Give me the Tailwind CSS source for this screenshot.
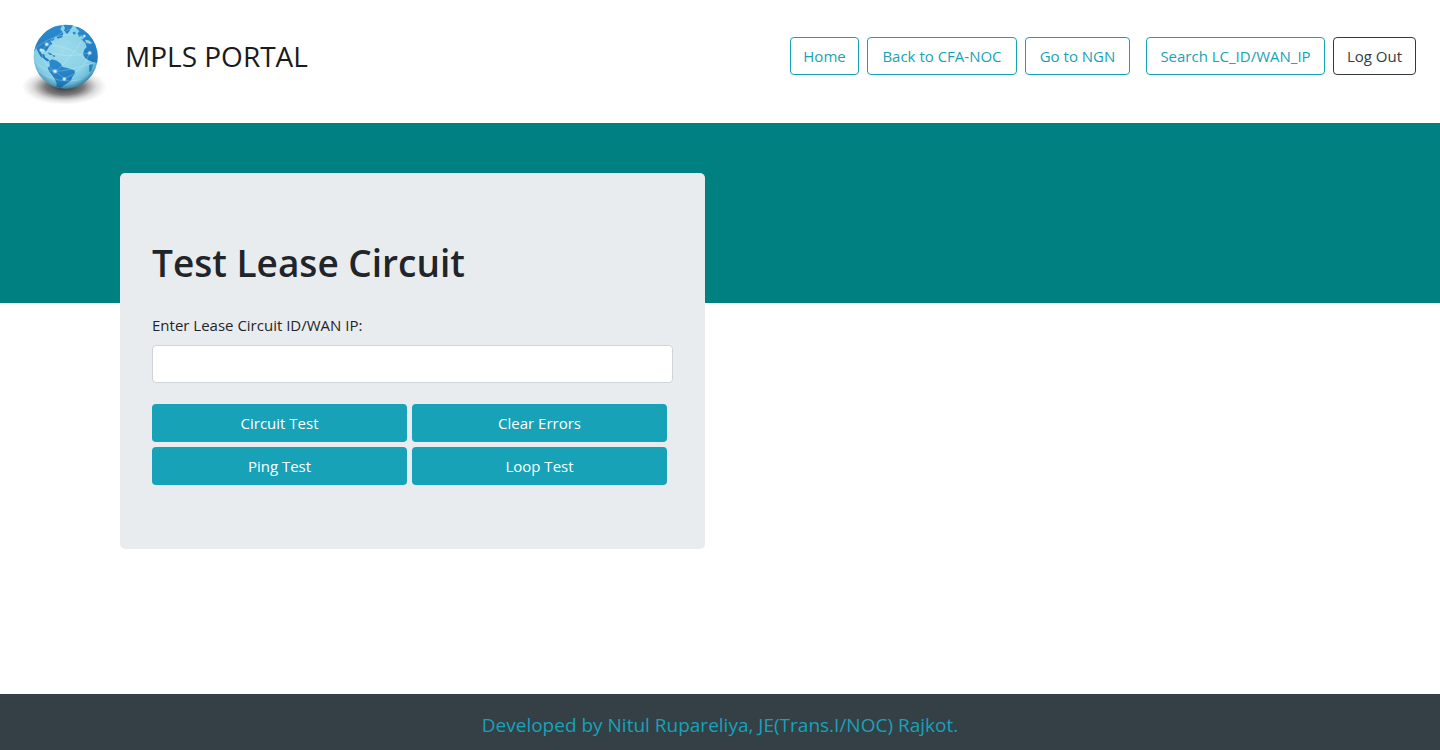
<!DOCTYPE html>
<html lang="en">
<head>
<meta charset="utf-8">
<meta name="viewport" content="width=device-width, initial-scale=1">
<title>MPLS Portal</title>
<script src="https://cdn.jsdelivr.net/npm/@tailwindcss/browser@4"></script>
</head>
<body class="flex min-h-screen flex-col bg-white font-['Segoe_UI','Open_Sans',sans-serif] text-[15px] leading-6 text-[#212529]">
<header class="flex flex-wrap items-start justify-between pt-5 pr-6 pb-3 pl-5">
  <a href="#" class="flex items-start gap-[14px] text-[28px] leading-9 text-[#1b1b1b]">
    <svg class="size-[91px]" viewBox="30 30 273 273" aria-hidden="true">
      <defs>
        <radialGradient id="shade"><stop offset="0" stop-color="#222" stop-opacity=".95"/><stop offset=".45" stop-color="#333" stop-opacity=".65"/><stop offset=".75" stop-color="#555" stop-opacity=".2"/><stop offset="1" stop-color="#777" stop-opacity="0"/></radialGradient>
        <radialGradient id="sea" cx=".45" cy=".4" r=".6"><stop offset="0" stop-color="#9ddaec"/><stop offset=".7" stop-color="#8ad1e6"/><stop offset=".92" stop-color="#6dbbd8"/><stop offset="1" stop-color="#4f9dbd"/></radialGradient>
        <linearGradient id="land" x2="0" y2="1"><stop offset="0" stop-color="#2b8bd0"/><stop offset="1" stop-color="#2179bb"/></linearGradient>
        <radialGradient id="glow"><stop offset="0" stop-color="#fff"/><stop offset=".35" stop-color="#e6f4ff" stop-opacity=".8"/><stop offset="1" stop-color="#a5d8ff" stop-opacity="0"/></radialGradient>
        <radialGradient id="rim" cx=".5" cy=".38" r=".64"><stop offset=".8" stop-color="#134f70" stop-opacity="0"/><stop offset="1" stop-color="#134f70" stop-opacity=".45"/></radialGradient>
        <clipPath id="ball"><circle cx="167" cy="140" r="96"/></clipPath>
      </defs>
      <ellipse cx="163" cy="230" rx="128" ry="54" fill="url(#shade)"/>
      <circle cx="167" cy="140" r="96" fill="url(#sea)"/>
      <g clip-path="url(#ball)">
        <g fill="url(#land)">
          <path d="M64 138 78 97 108 63 134 48 157 46 151 58 160 68 157 82 144 86 137 80 131 91 122 94 127 103 118 108 112 119 107 126 104 119 96 116 91 122 94 131 103 133 105 142 115 148 118 153 111 154 101 146 91 139 84 126 79 115 72 125Z"/>
          <path d="M158 43 190 44 184 55 178 64 171 72 162 62 165 53Z"/>
          <path d="M117 153 127 148 140 152 151 160 158 171 175 175 193 181 196 189 187 201 183 212 172 220 162 226 151 235 139 233 140 219 134 207 127 196 117 184 113 175 120 166Z"/>
          <path d="M196 52 209 51 234 67 251 91 266 120 266 159 250 157 236 151 226 145 219 133 223 119 230 111 226 99 220 94 214 88 223 83 215 78 207 80 202 71 208 64Z"/>
          <path d="M112 126 122 129 127 135 119 134ZM127 134 137 138 131 141ZM188 67 196 65 197 73 190 74Z"/>
          <path d="M237 164 250 163 244 183 238 186Z"/>
        </g>
        <path d="M131 88 139 82 145 90 135 94ZM225 89 236 91 247 99 240 102 228 98Z" fill="#8fd0e6"/>
        <g fill="none" stroke="#e2f6ff" stroke-opacity=".4" stroke-width="2">
          <path d="M70 122Q132 60 224 78"/><path d="M93 120Q160 148 239 129"/><path d="M110 103Q186 107 236 157"/><path d="M136 184Q176 155 225 78"/><path d="M74 151Q100 184 136 184T255 157"/><path d="M163 206Q220 184 239 129"/><path d="M110 103Q74 145 136 184L163 206"/><path d="M83 182Q140 224 215 209"/><path d="M110 103Q150 63 196 53"/>
        </g>
        <g fill="url(#glow)"><circle cx="110" cy="103" r="8"/><circle cx="93" cy="120" r="7"/><circle cx="135" cy="184" r="9"/><circle cx="163" cy="207" r="8"/><circle cx="239" cy="129" r="8"/><circle cx="223" cy="78" r="6"/></g>
      </g>
      <circle cx="167" cy="140" r="96" fill="url(#rim)"/>
    </svg>
    <span class="mt-[18px]">MPLS PORTAL</span>
  </a>
  <nav class="mt-[17px] flex flex-wrap gap-2 text-center text-[#17a2b8]">
    <a href="#" class="w-[69px] rounded border border-current py-1.5 whitespace-nowrap">Home</a>
    <a href="#" class="w-[150px] rounded border border-current py-1.5 whitespace-nowrap">Back to CFA-NOC</a>
    <a href="#" class="mr-2 w-[105px] rounded border border-current py-1.5 whitespace-nowrap">Go to NGN</a>
    <a href="#" class="w-[179px] rounded border border-current py-1.5 whitespace-nowrap">Search LC_ID/WAN_IP</a>
    <a href="#" class="w-[83px] rounded border border-current py-1.5 whitespace-nowrap text-[#343a40]">Log Out</a>
  </nav>
</header>
<div class="h-[180px] bg-[#008080]"></div>
<main class="mx-auto -mt-[130px] mb-10 grid w-full max-w-[1200px] grow grid-cols-2 items-start gap-[30px]">
  <form class="rounded-[5px] bg-[#e9ecef] px-8 py-16">
    <h1 class="mt-0.5 text-[37px] leading-12 font-semibold">Test Lease Circuit</h1>
    <label for="circuit" class="mt-[26px] block text-[15px]">Enter Lease Circuit ID/WAN IP:</label>
    <input id="circuit" type="text" class="mt-2 block h-[38px] w-full rounded border border-[#ced4da] bg-white px-3">
    <div class="mt-[21px] mr-1.5 grid grid-cols-2 gap-[5px] text-white">
      <button type="button" class="h-[38px] rounded bg-[#17a2b8]">Circuit Test</button>
      <button type="button" class="h-[38px] rounded bg-[#17a2b8]">Clear Errors</button>
      <button type="button" class="h-[38px] rounded bg-[#17a2b8]">Ping Test</button>
      <button type="button" class="h-[38px] rounded bg-[#17a2b8]">Loop Test</button>
    </div>
  </form>
</main>
<footer class="bg-[#344045] pt-[19px] pb-[13px] text-center text-[19px] text-[#17a2b8]">Developed by Nitul Rupareliya, JE(Trans.I/NOC) Rajkot.</footer>
</body>
</html>
